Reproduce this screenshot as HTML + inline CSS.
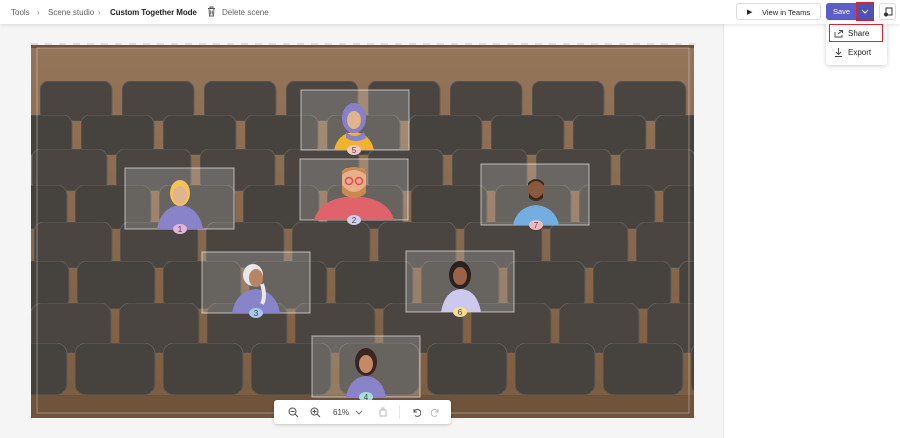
<!DOCTYPE html>
<html><head><meta charset="utf-8"><style>
*{margin:0;padding:0;box-sizing:border-box}
body{width:900px;height:438px;overflow:hidden;background:#f5f5f5;font-family:"Liberation Sans",sans-serif;position:relative;color:#242424}
.top{position:absolute;left:0;top:0;width:900px;height:24px;background:#fff;box-shadow:0 1px 4px rgba(0,0,0,.12);font-size:8px;z-index:2}
.top span{position:absolute;top:8px;white-space:nowrap}
.right{position:absolute;left:723px;top:24px;width:177px;height:414px;background:#fff;border-left:1px solid #e5e5e5}
.btn{position:absolute;font-size:7.5px;border-radius:3px}
.toolbar{position:absolute;left:274px;top:400px;width:177px;height:24px;background:#fff;border-radius:3px;box-shadow:0 1px 3px rgba(0,0,0,.2);font-size:8px;color:#424242}
.menu{position:absolute;left:826px;top:21px;width:61px;height:44px;background:#fff;border-radius:3px;box-shadow:0 1px 4px rgba(0,0,0,.2);font-size:8px;z-index:3}
</style></head><body>
<div class="right"></div>
<div class="top">
<span style="left:11px;color:#616161">Tools</span>
<span style="left:37px;color:#888">›</span>
<span style="left:48px;color:#616161">Scene studio</span>
<span style="left:98px;color:#888">›</span>
<span style="left:110px;font-weight:bold;letter-spacing:-.1px">Custom Together Mode</span>
<svg style="position:absolute;left:207px;top:6px" width="9" height="11" viewBox="0 0 9 11"><path d="M1 2.5h7M3 2.5V1h3v1.5M2 2.5l.5 7.5h4l.5-7.5M3.7 4.5v4M5.3 4.5v4" fill="none" stroke="#555" stroke-width=".9"/></svg>
<span style="left:222px;color:#616161">Delete scene</span>
<div class="btn" style="left:736px;top:3px;width:85px;height:17px;background:#fff;border:1px solid #ddd;"><span style="left:10px;top:4px;font-size:7px">▶</span><span style="left:25px;top:4px">View in Teams</span></div>
<div class="btn" style="left:826px;top:3px;width:30px;height:17px;background:#5b5fc7;color:#fff;border-radius:3px 0 0 3px"><span style="left:7px;top:4px">Save</span></div>
<div class="btn" style="left:856px;top:2px;width:18px;height:19px;background:#4f52b2;border:1.5px solid #e0202a;border-radius:0"><svg style="position:absolute;left:4px;top:6px" width="8" height="5"><path d="M1 1l3 3 3-3" fill="none" stroke="#fff" stroke-width="1"/></svg></div>
<div class="btn" style="left:879px;top:3px;width:17px;height:17px;background:#fff;border:1px solid #ddd"><svg style="position:absolute;left:3px;top:3px" width="10" height="10"><rect x="3" y="1" width="6" height="7" fill="none" stroke="#333" stroke-width="1"/><circle cx="3" cy="7.5" r="2" fill="#333"/></svg></div>
</div>
<div class="menu">
<div style="position:absolute;left:3px;top:3px;width:54px;height:18px;border:1.5px solid #e0202a"></div>
<svg style="position:absolute;left:8px;top:8px" width="9" height="9"><path d="M1 3v5h7V6M4 5l4-3M5 1.5h3.5V4" fill="none" stroke="#444" stroke-width=".9"/></svg>
<span style="position:absolute;left:22px;top:8px">Share</span>
<svg style="position:absolute;left:8px;top:27px" width="9" height="9"><path d="M4.5 0v6M2 4l2.5 2.5L7 4M1 8.5h7" fill="none" stroke="#444" stroke-width=".9"/></svg>
<span style="position:absolute;left:22px;top:27px">Export</span>
</div>
<div style="position:absolute;left:31px;top:43px;width:663px;height:3px;background:repeating-linear-gradient(90deg,#ddd 0 7px,transparent 7px 14px)"></div>
<svg style="position:absolute;left:31px;top:45px" width="663" height="373" viewBox="0 0 663 373">
<defs>
<linearGradient id="wall" x1="0" y1="0" x2="0" y2="1"><stop offset="0" stop-color="#95755a"/><stop offset="1" stop-color="#7a5c40"/></linearGradient>
<pattern id="p1" patternUnits="userSpaceOnUse" x="9" y="36" width="82" height="40"><rect x="0" y="0" width="72" height="40" rx="9" fill="#4a4541" stroke="#625c55"/></pattern>
<pattern id="p2" patternUnits="userSpaceOnUse" x="-32" y="70" width="82" height="40"><rect x="0" y="0" width="73" height="40" rx="9" fill="#46423e" stroke="#625c55"/></pattern>
<pattern id="p3" patternUnits="userSpaceOnUse" x="1" y="104" width="84" height="42"><rect x="0" y="0" width="75" height="42" rx="9" fill="#4a4541" stroke="#625c55"/></pattern>
<pattern id="p4" patternUnits="userSpaceOnUse" x="-40" y="140" width="84" height="44"><rect x="0" y="0" width="76" height="44" rx="10" fill="#46423e" stroke="#625c55"/></pattern>
<pattern id="p5" patternUnits="userSpaceOnUse" x="3" y="177" width="86" height="46"><rect x="0" y="0" width="78" height="46" rx="10" fill="#4a4541" stroke="#625c55"/></pattern>
<pattern id="p6" patternUnits="userSpaceOnUse" x="-40" y="216" width="86" height="48"><rect x="0" y="0" width="78" height="48" rx="10" fill="#46423e" stroke="#625c55"/></pattern>
<pattern id="p7" patternUnits="userSpaceOnUse" x="0" y="258" width="88" height="50"><rect x="0" y="0" width="80" height="50" rx="11" fill="#4a4541" stroke="#625c55"/></pattern>
<pattern id="p8" patternUnits="userSpaceOnUse" x="-44" y="298" width="88" height="52"><rect x="0" y="0" width="80" height="52" rx="11" fill="#46423e" stroke="#625c55"/></pattern>
</defs>
<rect width="663" height="373" fill="url(#wall)"/>
<rect y="0" width="663" height="3" fill="#6e543a"/>
<rect y="36" width="663" height="40" fill="url(#p1)"/>
<rect y="70" width="663" height="40" fill="url(#p2)"/>
<rect y="104" width="663" height="42" fill="url(#p3)"/>
<rect y="140" width="663" height="44" fill="url(#p4)"/>
<rect y="177" width="663" height="46" fill="url(#p5)"/>
<rect y="216" width="663" height="48" fill="url(#p6)"/>
<rect y="258" width="663" height="50" fill="url(#p7)"/>
<rect y="298" width="663" height="52" fill="url(#p8)"/>
<rect y="350" width="663" height="23" fill="#6f533a"/>
<rect x="6" y="3" width="652" height="365" fill="none" stroke="rgba(255,255,255,.35)"/>
<g transform="translate(-31,-45)">
<g fill="rgba(255,255,255,.18)" stroke="rgba(255,255,255,.6)">
<rect x="301" y="90" width="108" height="60"/><rect x="300" y="159" width="108" height="61"/><rect x="125" y="168" width="109" height="61"/><rect x="481" y="164" width="108" height="61"/><rect x="202" y="252" width="108" height="61"/><rect x="406" y="251" width="108" height="61"/><rect x="312" y="336" width="108" height="61"/>
</g>
<path d="M334 150 q4-17 20-18 q16 1 20 18z" fill="#f0b22f"/><ellipse cx="354" cy="118" rx="12" ry="15" fill="#8880c9"/><ellipse cx="354" cy="120" rx="7" ry="9" fill="#e0b48c"/><path d="M346 132 q8 8 18 0 l2 6 q-10 6-20 0z" fill="#8880c9"/>
<path d="M314 220 q6-22 40-24 q34 2 40 24z" fill="#e0626a"/><rect x="342" y="168" width="24" height="28" rx="6" fill="#e8b089"/><path d="M342 185 q12 14 24 0 v8 q-12 10-24 0z" fill="#c98a4e"/><path d="M342 175 q12-10 24 0 v-4 q-12-8-24 0z" fill="#c98a4e"/><circle cx="349" cy="181" r="3.5" fill="none" stroke="#e24a5a" stroke-width="1.5"/><circle cx="359" cy="181" r="3.5" fill="none" stroke="#e24a5a" stroke-width="1.5"/>
<path d="M157 229 q4-22 23-24 q19 2 23 24z" fill="#8984c9"/><ellipse cx="180" cy="193" rx="10" ry="13" fill="#f5c15a"/><ellipse cx="180" cy="195" rx="7" ry="9" fill="#e0b48c"/>
<path d="M513 225 q4-18 23-20 q19 2 23 20z" fill="#74aee0"/><ellipse cx="536" cy="190" rx="8" ry="10" fill="#8a5a3a"/><path d="M528 186 q8-10 16 0 v-3 q-8-8-16 0z" fill="#3a2a22"/><path d="M529 193 q7 10 14 0 v5 q-7 6-14 0z" fill="#3a2a22"/>
<path d="M232 313 q4-22 24-24 q20 2 24 24z" fill="#8984c9"/><ellipse cx="253" cy="275" rx="10" ry="11" fill="#e8e8e8"/><ellipse cx="256" cy="278" rx="7" ry="9" fill="#b88466"/><path d="M262 284 q4 12 0 20" stroke="#e8e8e8" stroke-width="4" fill="none"/>
<path d="M441 312 q4-22 20-23 q16 1 20 23z" fill="#cdc8ee"/><ellipse cx="460" cy="275" rx="11" ry="14" fill="#2b2220"/><ellipse cx="460" cy="276" rx="7" ry="9" fill="#9a6246"/>
<path d="M346 397 q4-20 20-21 q16 1 20 21z" fill="#8984c9"/><ellipse cx="366" cy="362" rx="11" ry="14" fill="#3a2620"/><ellipse cx="366" cy="364" rx="7" ry="9" fill="#c48a68"/>
<g font-family="Liberation Sans" font-size="8" text-anchor="middle" fill="#444">
<ellipse cx="354" cy="150" rx="7" ry="5" fill="#f5c9c0"/><text x="354" y="153">5</text>
<ellipse cx="354" cy="220" rx="7" ry="5" fill="#cfcdf0"/><text x="354" y="223">2</text>
<ellipse cx="180" cy="229" rx="7" ry="5" fill="#e3b4dc"/><text x="180" y="232">1</text>
<ellipse cx="536" cy="225" rx="7" ry="5" fill="#f2b8c0"/><text x="536" y="228">7</text>
<ellipse cx="256" cy="313" rx="7" ry="5" fill="#a8c8f0"/><text x="256" y="316">3</text>
<ellipse cx="460" cy="312" rx="7" ry="5" fill="#f5dc90"/><text x="460" y="315">6</text>
<ellipse cx="366" cy="397" rx="7" ry="5" fill="#a8e0d8"/><text x="366" y="400">4</text>
</g></g>
</svg>
<div class="toolbar">
<svg style="position:absolute;left:14px;top:7px" width="11" height="11"><circle cx="4.5" cy="4.5" r="3.5" fill="none" stroke="#555"/><path d="M2.5 4.5h4M7 7l3 3" stroke="#555"/></svg>
<svg style="position:absolute;left:36px;top:7px" width="11" height="11"><circle cx="4.5" cy="4.5" r="3.5" fill="none" stroke="#555"/><path d="M2.5 4.5h4M4.5 2.5v4M7 7l3 3" stroke="#555"/></svg>
<span style="position:absolute;left:59px;top:8px">61%</span>
<svg style="position:absolute;left:81px;top:10px" width="8" height="5"><path d="M1 1l3 3 3-3" fill="none" stroke="#777"/></svg>
<svg style="position:absolute;left:105px;top:7px" width="8" height="10"><rect x="1" y="3" width="6" height="6" fill="none" stroke="#bbb"/><path d="M3 3V1h2v2" fill="none" stroke="#bbb"/></svg>
<div style="position:absolute;left:125px;top:5px;width:1px;height:14px;background:#e5e5e5"></div>
<svg style="position:absolute;left:138px;top:8px" width="9" height="9"><path d="M2 1v3h3M2 4a3.5 3.5 0 1 1 1 3.5" fill="none" stroke="#555"/></svg>
<svg style="position:absolute;left:157px;top:8px" width="9" height="9"><path d="M7 1v3H4M7 4a3.5 3.5 0 1 0-1 3.5" fill="none" stroke="#bbb"/></svg>
</div>
</body></html>
